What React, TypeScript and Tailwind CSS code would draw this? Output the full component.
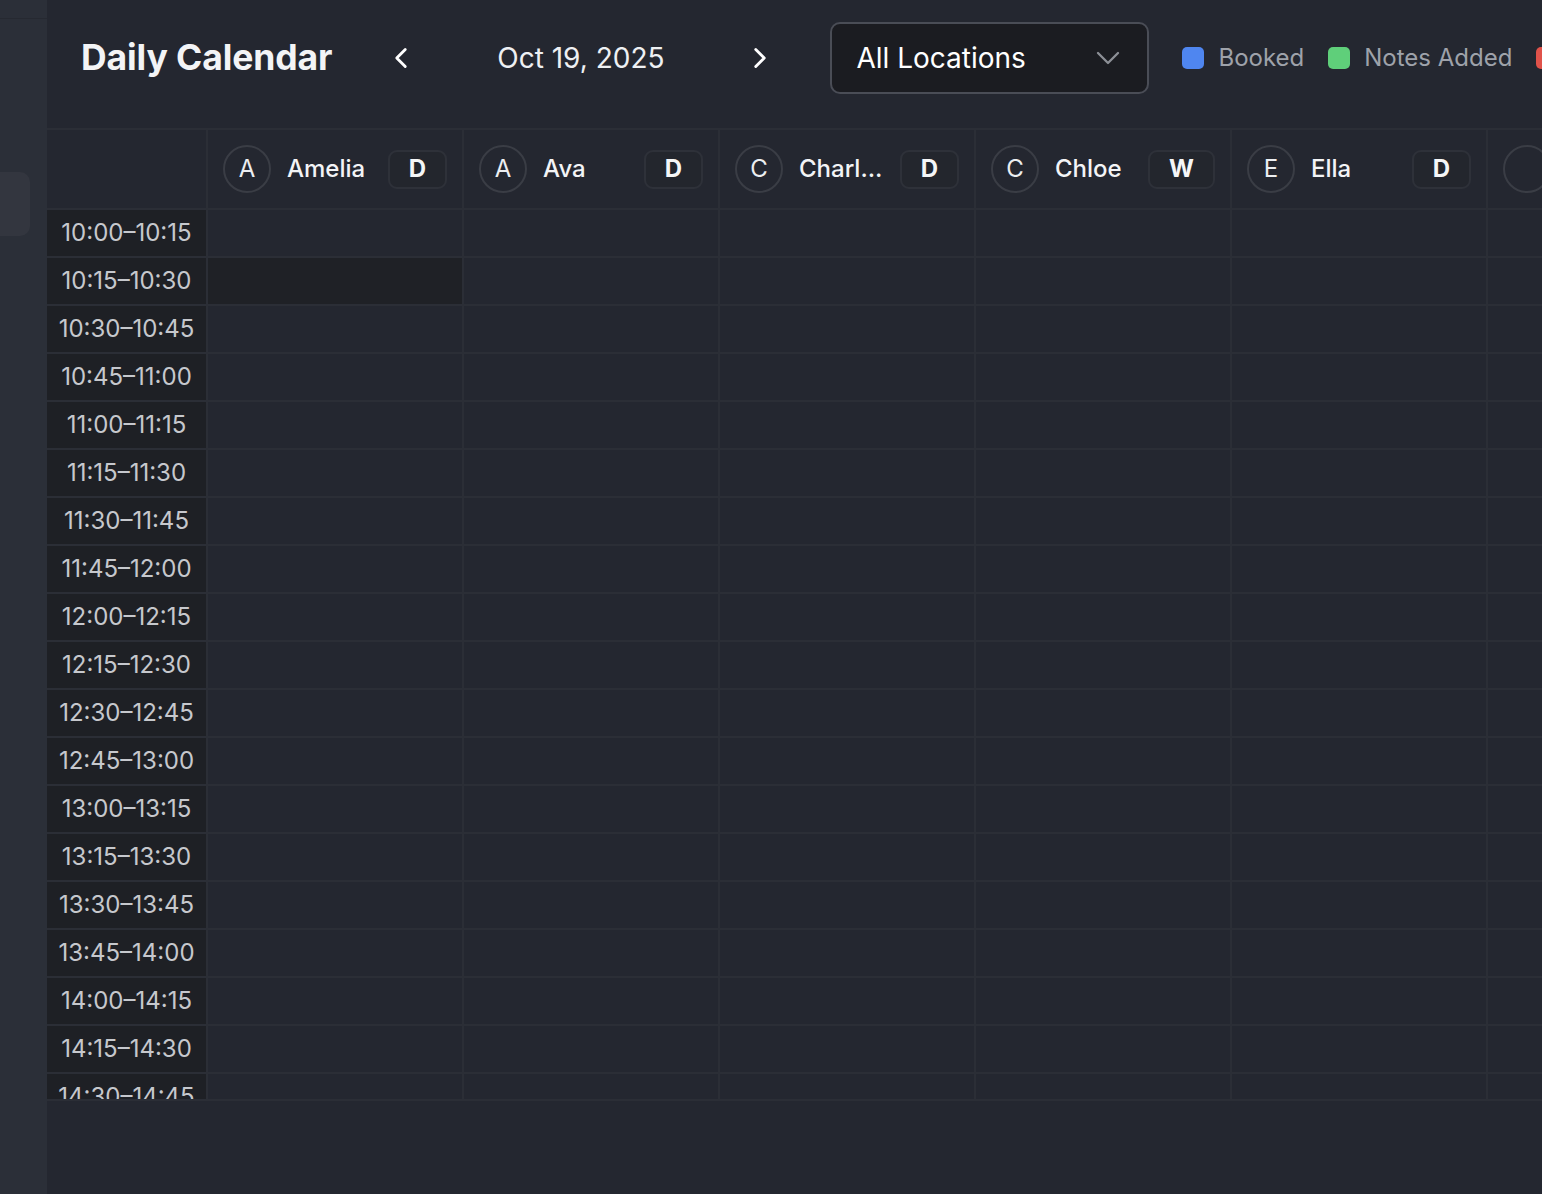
import React from "react";
import { ChevronLeft, ChevronRight, ChevronDown } from "lucide-react";

const staff = [
  { initial: "A", name: "Amelia", badge: "D" },
  { initial: "A", name: "Ava", badge: "D" },
  { initial: "C", name: "Charlotte", badge: "D" },
  { initial: "C", name: "Chloe", badge: "W" },
  { initial: "E", name: "Ella", badge: "D" },
  { initial: "", name: "Emily", badge: "D" },
];

function pad(n: number) {
  return n < 10 ? "0" + n : "" + n;
}

const slots: string[] = [];
for (let m = 10 * 60; m < 18 * 60; m += 15) {
  const a = `${pad(Math.floor(m / 60))}:${pad(m % 60)}`;
  const e = m + 15;
  const b = `${pad(Math.floor(e / 60))}:${pad(e % 60)}`;
  slots.push(`${a}–${b}`);
}

export default function App() {
  return (
    <div
      className="flex h-[1194px] w-[1542px] overflow-hidden bg-[#242730]"
      style={{ fontFamily: "Inter, 'Noto Sans', sans-serif" }}
    >
      {/* Sidebar */}
      <div className="flex w-[47px] shrink-0 flex-col bg-[#2b2f38]">
        <div className="h-[19px] border-b border-[#262931]" />
        <div className="mt-[153px] h-[64px] w-[30px] rounded-r-[10px] bg-[#33363f]" />
      </div>

      {/* Main */}
      <div className="flex min-w-0 flex-1 flex-col">
        {/* Header */}
        <div className="flex h-[128px] shrink-0 items-center overflow-hidden whitespace-nowrap pb-[12px] pl-[34px]">
          <h1 className="shrink-0 text-[35.5px] font-bold leading-none tracking-[-0.1px] text-[#f3f4f6]">
            Daily Calendar
          </h1>
          <button className="ml-[52px] flex h-[34px] w-[34px] shrink-0 items-center justify-center text-white">
            <ChevronLeft size={34} strokeWidth={2} />
          </button>
          <div className="w-[325px] shrink-0 text-center text-[28px] leading-none text-[#eef0f3]">
            Oct 19, 2025
          </div>
          <button className="flex h-[34px] w-[34px] shrink-0 items-center justify-center text-white">
            <ChevronRight size={34} strokeWidth={2} />
          </button>
          <div className="ml-[53px] flex h-[72px] w-[319px] shrink-0 items-center justify-between rounded-[10px] border-2 border-[#4a4d56] bg-[#1b1c21] pl-[24px] pr-[19px]">
            <span className="text-[28px] leading-none text-white">All Locations</span>
            <ChevronDown size={40} strokeWidth={1.4} className="text-[#8c8f96]" />
          </div>
          <div className="ml-[33px] flex shrink-0 items-center gap-[14px]">
            <span className="h-[22px] w-[22px] shrink-0 rounded-[5px] bg-[#4f86f0]" />
            <span className="text-[24px] leading-none text-[#9ea2aa]">Booked</span>
          </div>
          <div className="ml-[24px] flex shrink-0 items-center gap-[14px]">
            <span className="h-[22px] w-[22px] shrink-0 rounded-[5px] bg-[#5fcf7a]" />
            <span className="text-[24px] leading-none text-[#9ea2aa]">Notes Added</span>
          </div>
          <div className="ml-[24px] flex shrink-0 items-center gap-[14px]">
            <span className="h-[22px] w-[22px] shrink-0 rounded-[5px] bg-[#e0524a]" />
            <span className="text-[24px] leading-none text-[#9ea2aa]">Cancelled</span>
          </div>
        </div>

        {/* Grid */}
        <div className="flex min-h-0 flex-1 flex-col overflow-hidden border-y-2 border-[#2b2e36]">
          {/* Header row */}
          <div className="flex h-[80px] shrink-0 border-b-2 border-[#2b2e36]">
            <div className="w-[161px] shrink-0 border-r-2 border-[#2b2e36]" />
            {staff.map((s, i) => (
              <div
                key={i}
                className="flex w-[256px] shrink-0 items-center border-r-2 border-[#2b2e36] pl-[15px] pr-[15px]"
              >
                <div className="flex h-[48px] w-[48px] shrink-0 items-center justify-center rounded-full border-2 border-[#3a3d45] text-[24px] leading-none text-[#eceef1]">
                  {s.initial}
                </div>
                <div className="ml-[16px] min-w-0 flex-1 truncate text-[24px] font-medium leading-normal text-[#f3f4f6]">
                  {s.name}
                </div>
                <div className="ml-[14px] flex h-[39px] shrink-0 items-center justify-center rounded-[9px] border-2 border-[#2e3139] bg-[#23262d] px-[19px] text-[24px] font-bold leading-none text-[#f5f6f7]">
                  {s.badge}
                </div>
              </div>
            ))}
          </div>

          {/* Rows */}
          {slots.map((t, r) => (
            <div key={t} className="flex h-[48px] shrink-0 border-b-2 border-[#2b2e36]">
              <div className="flex w-[161px] shrink-0 items-center justify-center border-r-2 border-[#2b2e36] bg-[#1e2025] text-[24px] leading-none text-[#c6c8cd]">
                {t}
              </div>
              {staff.map((s, i) => (
                <div
                  key={i}
                  className={
                    r === 1 && i === 0
                      ? "w-[256px] shrink-0 border-r-2 border-[#2b2e36] bg-[#1f2126]"
                      : "w-[256px] shrink-0 border-r-2 border-[#2b2e36]"
                  }
                />
              ))}
            </div>
          ))}
        </div>

        <div className="h-[93px] shrink-0" />
      </div>
    </div>
  );
}
